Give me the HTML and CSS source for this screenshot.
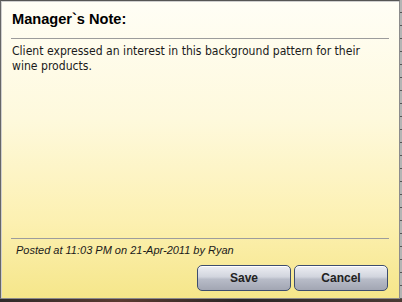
FILE: index.html
```html
<!DOCTYPE html>
<html lang="en">
<head>
  <meta charset="UTF-8" />
  <title>Manager's Note</title>
  <link rel="stylesheet" href="styles.css">
</head>
<body>
  <div class="page">
    <div class="note-dialog">
      <h2 class="note-title">Manager`s Note:</h2>
      <div class="rule"></div>
      <p class="note-text">Client expressed an interest in this background pattern for their wine products.</p>
      <div class="rule"></div>
      <p class="posted">Posted at 11:03 PM on 21-Apr-2011 by Ryan</p>
      <div class="actions">
        <button class="btn">Save</button>
        <button class="btn">Cancel</button>
      </div>
    </div>
    <div class="side"></div>
  </div>
  <div class="backdrop"></div>
</body>
</html>
```

FILE: styles.css
```css
* { box-sizing: border-box; }
body {
  margin: 0;
  background: #3b3232;
  font-family: 'Liberation Sans', Arial, sans-serif;
  color: #111;
}
.page {
  display: flex;
  height: 299px;
}
.note-dialog {
  width: 400px;
  height: 299px;
  display: flex;
  flex-direction: column;
  border: 1px solid #8c8c8c;
  border-top: 1px solid #555;
  border-left: 1px solid #666;
  box-shadow: inset 1px 1px 0 #cfcfcf;
  background: linear-gradient(#fffef6 0%, #fef9dc 40%, #fcf0b0 75%, #f5e68a 100%);
}
.side {
  flex: 1;
  background: repeating-linear-gradient(#b4b4b4 0, #b4b4b4 12px, #555 12px, #555 13px);
}
.backdrop {
  height: 3px;
  background: linear-gradient(90deg, #2e2a2a, #5a3a30 30%, #2a2626 60%, #4a3a34);
}
.note-title {
  margin: 0;
  padding: 10px 11px 0;
  height: 37px;
  font-size: 14.6px;
  font-weight: bold;
  color: #000;
}
.rule {
  height: 1px;
  margin: 0 10px 0 10px;
  background: #9c9c9c;
}
.note-text {
  flex: 1;
  margin: 0;
  padding: 5px 11px 0;
  font-family: 'DejaVu Sans Condensed', 'DejaVu Sans', sans-serif;
  font-size: 12.1px;
  line-height: 15px;
  color: #1a1a1a;
}
.posted {
  margin: 0;
  padding: 5px 15px 0;
  height: 26px;
  font-size: 11px;
  font-style: italic;
  color: #1a1a1a;
}
.actions {
  display: flex;
  justify-content: flex-end;
  gap: 3px;
  padding: 0 11px 7px;
}
.btn {
  width: 94px;
  height: 26px;
  border: 1px solid #3d4d6e;
  border-radius: 5px;
  background: linear-gradient(#eceef3 0%, #d2d5de 45%, #b8bcc8 55%, #a2a6b3 100%);
  box-shadow: inset 0 1px 0 #fff;
  font-family: 'Liberation Sans', Arial, sans-serif;
  font-size: 12px;
  font-weight: bold;
  color: #222;
  padding: 0;
}
```
